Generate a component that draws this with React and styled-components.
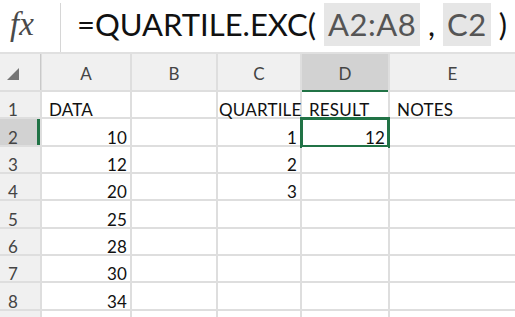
import React from "react";
import styled, { createGlobalStyle, css } from "styled-components";

const Global = createGlobalStyle`
  html, body { margin: 0; padding: 0; background: #fff; }
  body { font-family: Lato, "Open Sans", sans-serif; overflow: hidden; }
`;

const Page = styled.div`
  width: 515px;
  height: 317px;
  overflow: hidden;
  background: #fff;
  display: flex;
  flex-direction: column;
`;

const FormulaBar = styled.div`
  height: 52px;
  flex: none;
  display: flex;
  align-items: stretch;
  border-bottom: 2px solid #e0e0e0;
`;

const FxBox = styled.div`
  flex: 0 0 61px;
  display: flex;
  align-items: center;
  justify-content: flex-start;
  margin-top: 3px;
  border-right: 1px solid #d6d6d6;
  font-family: "Liberation Serif", "DejaVu Serif", serif;
  font-style: italic;
  font-size: 33px;
  color: #4a4a4a;
  padding: 0 0 6px 10px;
  box-sizing: border-box;
`;

const Formula = styled.div`
  flex: 1;
  min-width: 0;
  display: flex;
  align-items: center;
  padding-left: 16px;
  font-size: 31px;
  color: #111;
  white-space: pre;
`;

const Ref = styled.span`
  background: #e6e6e6;
  color: #555;
  height: 43px;
  display: inline-flex;
  align-items: center;
  padding: 0 4px;
  margin-top: -4px;
  letter-spacing: 0.5px;
`;

const Plain = styled.span`
  margin-top: -4px;
`;

const Grid = styled.div`
  flex: 1;
  display: grid;
  grid-template-columns: 40px 88px 84px 82px 86px 1fr;
  grid-template-rows: 36px repeat(9, 25.33px);
  gap: 2px;
  background: #dedede;
`;

const Corner = styled.div`
  background: #f0f0f0;
  position: relative;
  border-right: 1px solid #c9c9c9;
  margin-right: -1px;
`;

const Triangle = styled.div`
  position: absolute;
  left: 7px;
  bottom: 10px;
  width: 0;
  height: 0;
  border-left: 12px solid transparent;
  border-bottom: 12px solid #767676;
`;

const ColHead = styled.div`
  background: ${(p) => (p.$sel ? "#d2d2d2" : "#f0f0f0")};
  color: #444;
  font-size: 17px;
  display: flex;
  align-items: center;
  justify-content: center;
  padding-top: 2px;
  box-sizing: border-box;
  ${(p) =>
    p.$sel &&
    css`
      box-shadow: 0 2px 0 #217346;
    `}
`;

const RowHead = styled.div`
  background: ${(p) => (p.$sel ? "#d2d2d2" : "#f0f0f0")};
  color: #444;
  font-size: 17px;
  line-height: 15px;
  display: flex;
  align-items: flex-end;
  padding: 0 0 0 8px;
  box-sizing: border-box;
  ${(p) =>
    p.$sel &&
    css`
      box-shadow: inset -3px 0 0 #217346;
    `}
`;

const Cell = styled.div`
  background: #fff;
  font-size: 17px;
  line-height: 15px;
  letter-spacing: 0.2px;
  color: #111;
  display: flex;
  align-items: flex-end;
  justify-content: ${(p) => (p.$num ? "flex-end" : "flex-start")};
  padding: ${(p) => (p.$num ? "0 3px 0 0" : `0 0 0 ${p.$pad}px`)};
  box-sizing: border-box;
  white-space: nowrap;
  position: relative;
`;

const Selection = styled.div`
  position: absolute;
  left: -2px;
  right: -2px;
  top: -2px;
  bottom: -3px;
  border: 3px solid #217346;
  pointer-events: none;
`;

const cols = ["A", "B", "C", "D", "E"];
const rows = [
  ["DATA", "", "QUARTILE", "RESULT", "NOTES"],
  [10, "", 1, 12, ""],
  [12, "", 2, "", ""],
  [20, "", 3, "", ""],
  [25, "", "", "", ""],
  [28, "", "", "", ""],
  [30, "", "", "", ""],
  [34, "", "", "", ""],
  ["", "", "", "", ""],
];

export default function App() {
  return (
    <Page>
      <Global />
      <FormulaBar>
        <FxBox>fx</FxBox>
        <Formula>
          <Plain>=QUARTILE.EXC( </Plain>
          <Ref>A2:A8</Ref>
          <Plain> , </Plain>
          <Ref>C2</Ref>
          <Plain> )</Plain>
        </Formula>
      </FormulaBar>
      <Grid>
        <Corner>
          <Triangle />
        </Corner>
        {cols.map((c) => (
          <ColHead key={c} $sel={c === "D"}>
            {c}
          </ColHead>
        ))}
        {rows.map((r, i) => (
          <React.Fragment key={i}>
            <RowHead $sel={i === 1}>{i < 8 ? i + 1 : ""}</RowHead>
            {r.map((v, j) => (
              <Cell
                key={j}
                $num={typeof v === "number"}
                $pad={v === "QUARTILE" ? 1 : 7}
              >
                {v}
                {i === 1 && j === 3 && <Selection />}
              </Cell>
            ))}
          </React.Fragment>
        ))}
      </Grid>
    </Page>
  );
}
